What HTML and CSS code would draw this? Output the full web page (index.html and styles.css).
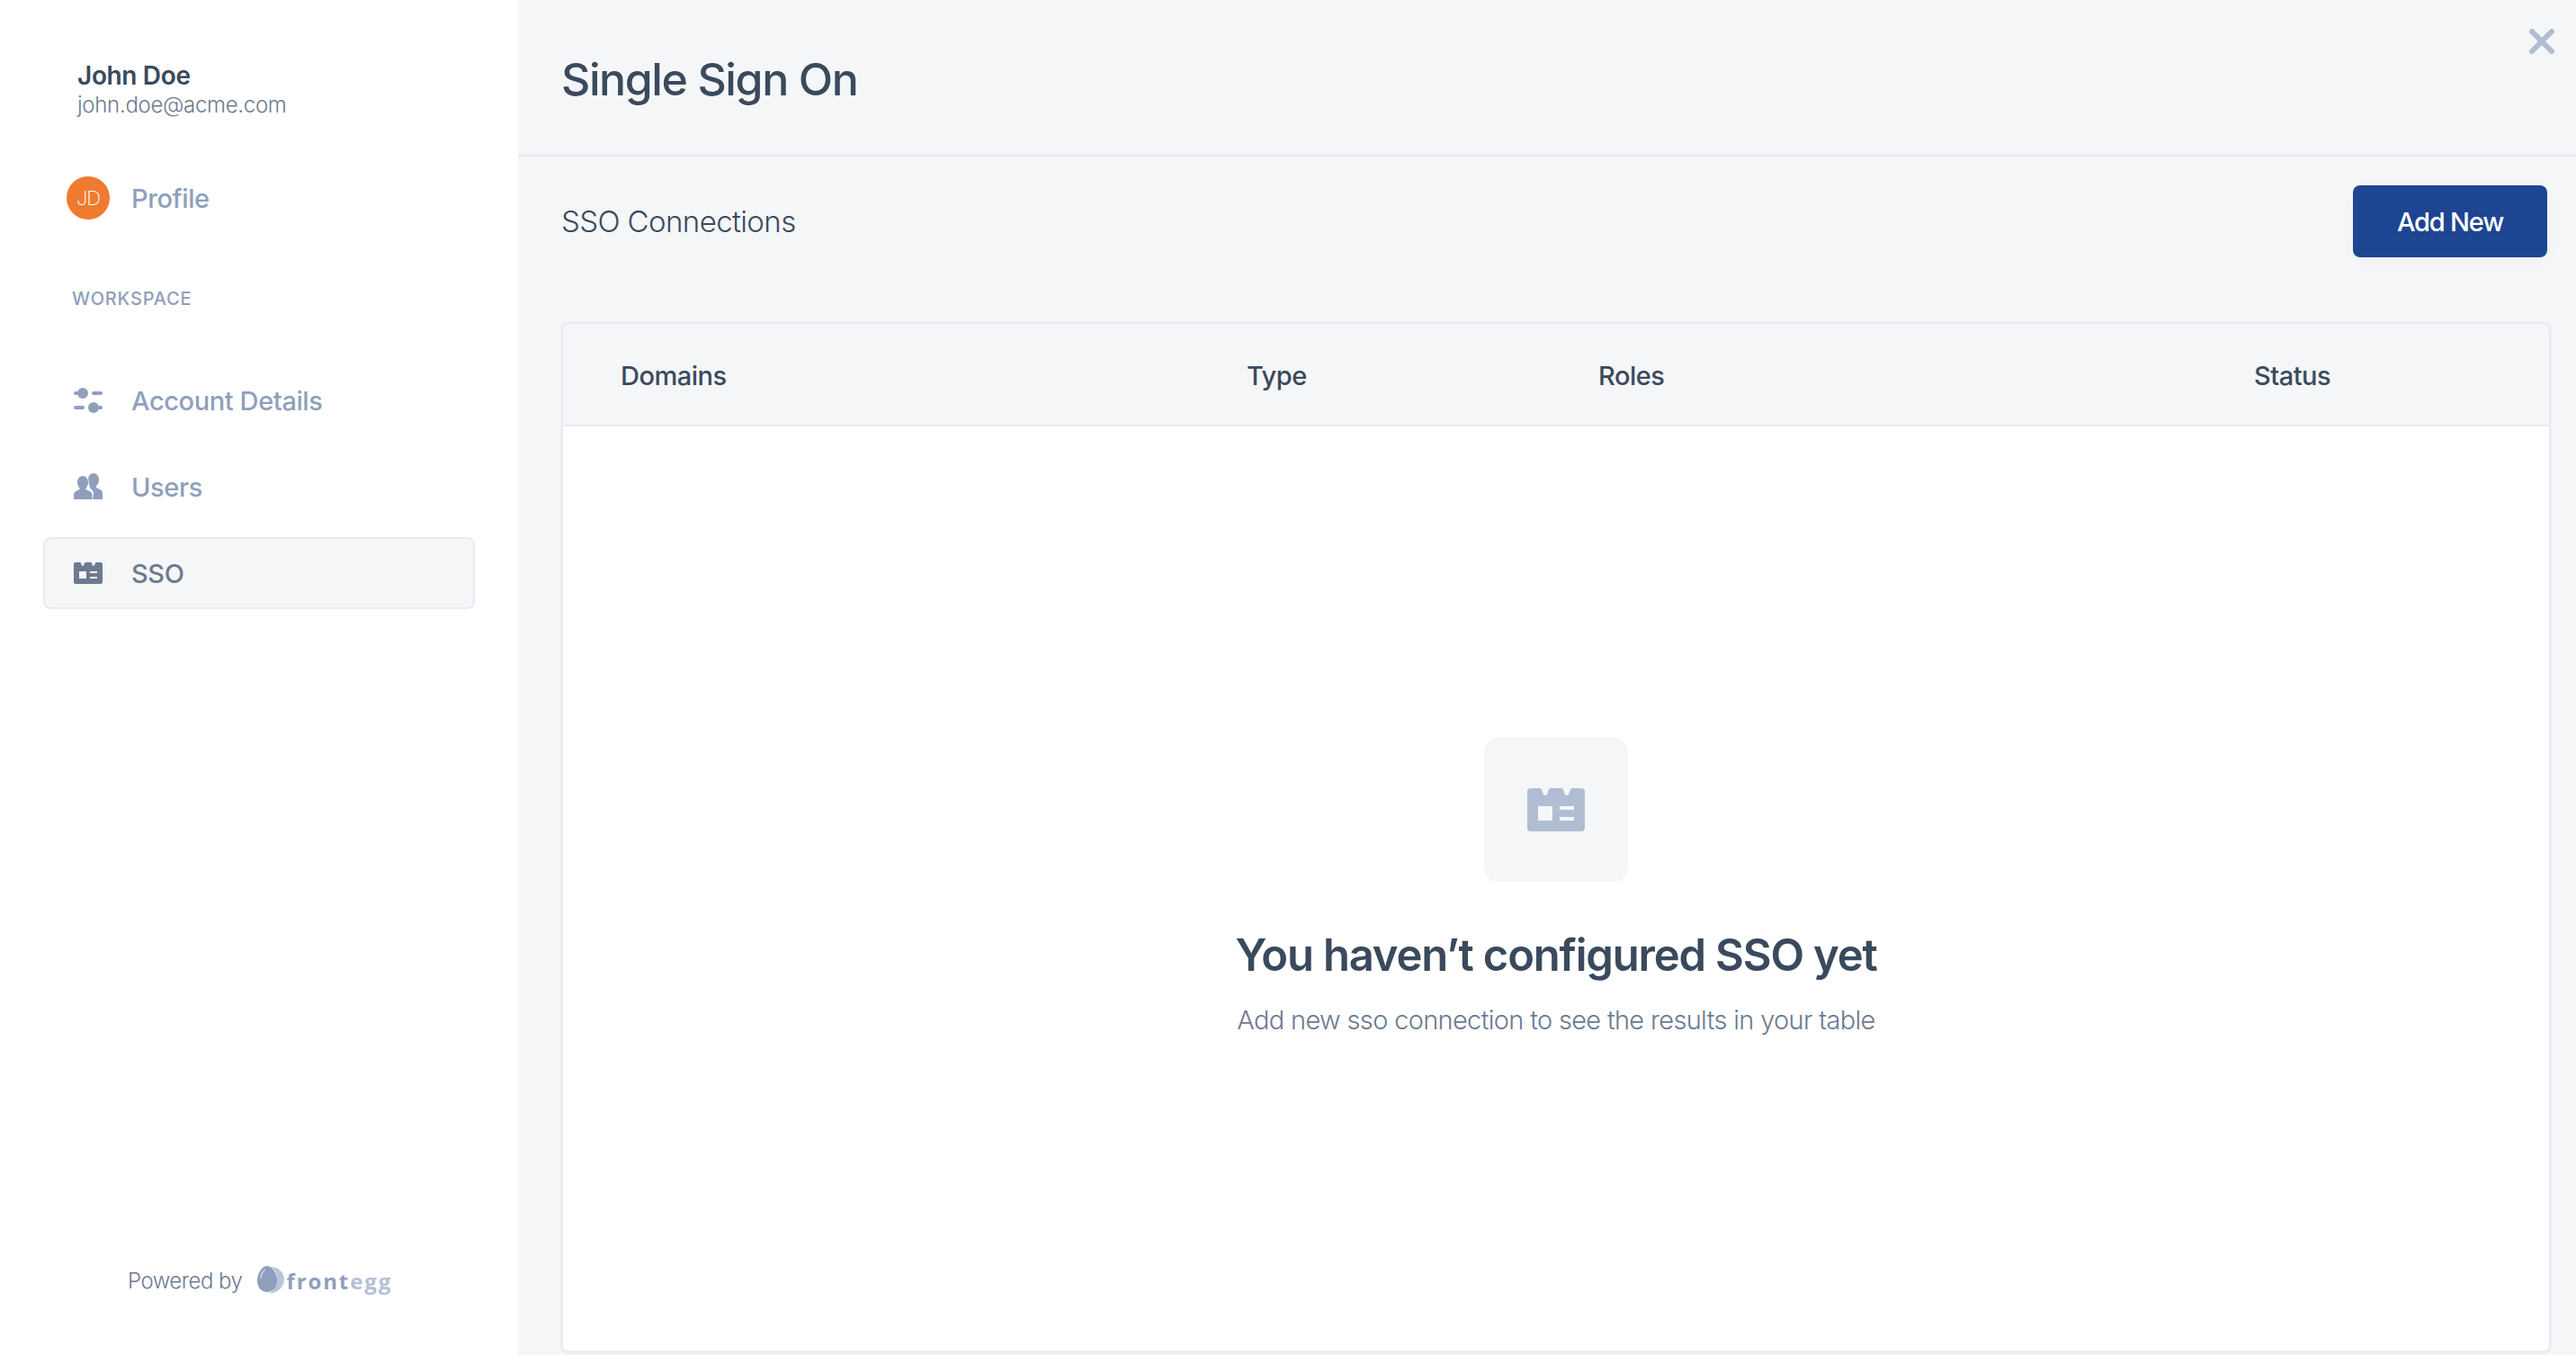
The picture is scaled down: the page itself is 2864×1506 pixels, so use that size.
FILE: index.html
```html
<!DOCTYPE html>
<html lang="en">
<head>
<meta charset="utf-8">
<title>Single Sign On</title>
<link rel="stylesheet" href="styles.css">
</head>
<body>
<svg class="defs" width="0" height="0" aria-hidden="true">
  <symbol id="badge" viewBox="0 0 64 48">
    <path fill="currentColor" fill-rule="evenodd" d="M4 0H14C17 0 16.5 8 20 8C23.5 8 23 0 26 0H38C41 0 40.5 8 44 8C47.5 8 47 0 50 0H60a4 4 0 0 1 4 4V44a4 4 0 0 1-4 4H4a4 4 0 0 1-4-4V4a4 4 0 0 1 4-4ZM12 20V36H28V20ZM36 20V24H52V20ZM36 32V36H52V32Z"/>
  </symbol>
</svg>
<div class="app">
  <aside class="sidebar">
    <div class="user">
      <div class="user-name">John Doe</div>
      <div class="user-mail">john.doe@acme.com</div>
    </div>
    <div class="nav-item nav-profile">
      <span class="avatar">JD</span>
      <span>Profile</span>
    </div>
    <div class="section-label">WORKSPACE</div>
    <nav class="nav">
      <div class="nav-item">
        <svg class="nav-icon" viewBox="0 0 32 32" fill="currentColor">
          <rect x="0" y="6" width="6" height="4" rx="2"/><circle cx="10" cy="8" r="6"/><rect x="20" y="6" width="12" height="4" rx="2"/>
          <rect x="0" y="22" width="12" height="4" rx="2"/><circle cx="22" cy="24" r="6"/><rect x="26" y="22" width="6" height="4" rx="2"/>
        </svg>
        <span>Account Details</span>
      </div>
      <div class="nav-item">
        <svg class="nav-icon" viewBox="0 0 32 32" fill="currentColor">
          <path d="M22 1c3.500 0 6 3 6 7 0 3-1 5.500-3 7v2c2 1.500 7 2 7 6v6a1 1 0 0 1-1 1H21l1-7c0-2-2-4-4-5.500v-2.500c-2-1.500-2-4-2-6.500C16 4 18.500 1 22 1z"/>
          <path stroke="#fff" stroke-width="1.500" paint-order="stroke" d="M10 4c3.500 0 6 3 6 7 0 3-1 5-2.500 6.500V19c2.500 1.500 7 2 7 6v5H1a1 1 0 0 1-1-1v-4c0-4 4-4.500 6.500-6v-1.500C5 16 4 14 4 11c0-4 2.500-7 6-7z"/>
        </svg>
        <span>Users</span>
      </div>
      <div class="nav-item nav-active">
        <svg class="nav-icon nav-icon-badge"><use href="#badge"/></svg>
        <span>SSO</span>
      </div>
    </nav>
    <div class="powered">
      <span class="powered-text">Powered by</span>
      <svg class="egg" viewBox="0 0 30 32">
        <path fill="#b9c5d9" d="M15 1c8 0 15 6 15 14s-7 15-17 16c6-4 9-10 9-16S20 4 15 1z"/>
        <path fill="#8f9fbb" d="M11 0c6 0 11 9 11 16s-4 13-11 13S0 23 0 16 5 0 11 0z"/>
        <path fill="none" stroke="#c9d3e3" stroke-width="1.500" d="M4 14c0-4 2-8 5-10"/>
      </svg>
      <span class="brand"><span class="brand-a">front</span><span class="brand-b">egg</span></span>
    </div>
  </aside>
  <main class="main">
    <header class="page-head">
      <h1 class="page-title">Single Sign On</h1>
    </header>
    <button class="close" aria-label="Close">
      <svg viewBox="0 0 28 28" width="28" height="28"><path d="M3 3L25 25M25 3L3 25" stroke="currentColor" stroke-width="6" stroke-linecap="round"/></svg>
    </button>
    <section class="content">
      <div class="toolbar">
        <h2 class="toolbar-title">SSO Connections</h2>
        <button class="btn-add">Add New</button>
      </div>
      <div class="table">
        <div class="table-head">
          <span>Domains</span>
          <span>Type</span>
          <span>Roles</span>
          <span>Status</span>
        </div>
        <div class="table-body">
          <div class="empty-tile"><svg class="empty-icon"><use href="#badge"/></svg></div>
          <h3 class="empty-title">You haven’t configured SSO yet</h3>
          <p class="empty-text">Add new sso connection to see the results in your table</p>
        </div>
      </div>
    </section>
  </main>
</div>
</body>
</html>
```
FILE: styles.css
```css
* { box-sizing: border-box; }
html, body { margin: 0; height: 100%; }
body { font-family: Inter, "Noto Sans", sans-serif; background: #f5f6f8; color: #3a4a5c; overflow: hidden; }
.defs { position: absolute; }
.app { display: flex; height: 1506px; }

.sidebar { width: 576px; flex: none; background: #fff; display: flex; flex-direction: column; padding: 0 48px; }
.user { padding: 67px 0 0 38px; }
.user-name { font-size: 28px; font-weight: 600; line-height: 34px; color: #3a4a5c; letter-spacing: -0.35px; }
.user-mail { font-size: 24px; font-weight: 300; line-height: 32px; color: #6d7a8f; letter-spacing: -0.3px; }
.nav-item { display: flex; align-items: center; gap: 32px; height: 80px; padding-left: 32px; font-size: 29px; font-weight: 500; color: #8f9fbb; letter-spacing: -0.4px; border: 2px solid transparent; border-radius: 8px; }
.nav-profile { margin-top: 63px; gap: 24px; padding-left: 26px; height: 48px; border: 0; }
.avatar { width: 48px; height: 48px; border-radius: 50%; background: #f07a30; color: #fff; font-size: 22px; font-weight: 200; display: flex; align-items: center; justify-content: center; letter-spacing: -1px; }
.section-label { margin: 76px 0 0 32px; font-size: 20px; line-height: 24px; font-weight: 500; letter-spacing: 0.8px; color: #8f9fbb; }
.nav { margin-top: 61px; display: flex; flex-direction: column; gap: 16px; }
.nav-icon { width: 32px; height: 32px; flex: none; }
.nav-icon-badge { height: 24px; }
.nav-active { background: #f5f6f8; border-color: #e8ebf3; color: #6d7a8f; }
.powered { margin-top: auto; margin-bottom: 68px; display: flex; align-items: center; padding-left: 94px; height: 30px; }
.powered-text { font-size: 24px; font-weight: 300; color: #6d7a8f; letter-spacing: -0.5px; }
.egg { width: 30px; height: 32px; margin-left: 17px; }
.brand { font-family: "Open Sans", sans-serif; font-size: 24px; font-weight: 700; letter-spacing: 1.9px; margin-left: 2px; }
.brand-a { color: #8f9fbb; }
.brand-b { color: #b4c0d5; }

.main { flex: 1; min-width: 0; display: flex; flex-direction: column; position: relative; }
.page-head { height: 174px; flex: none; border-bottom: 2px solid #e8ebf3; display: flex; align-items: center; padding: 0 48px; }
.page-title { margin: 0; font-size: 50px; font-weight: 500; letter-spacing: -1.4px; color: #3a4a5c; transform: translateY(2px); }
.close { position: absolute; top: 32px; right: 24px; width: 28px; height: 28px; padding: 0; background: none; border: 0; color: #b0bdd3; }
.content { flex: 1; min-height: 0; display: flex; flex-direction: column; padding: 32px 28px 0 48px; }
.toolbar { display: flex; justify-content: space-between; align-items: center; height: 80px; padding-right: 4px; flex: none; }
.toolbar-title { margin: 0; font-size: 33px; font-weight: 300; color: #3a4a5c; letter-spacing: -0.6px; }
.btn-add { width: 216px; height: 80px; background: #1e4591; color: #fff; border: 0; border-radius: 8px; font: 500 29px Inter, sans-serif; letter-spacing: -1.200px; box-shadow: 0 4px 24px rgba(0,0,0,.02); }
.table { margin-top: 72px; flex: 1; min-height: 0; margin-bottom: 3px; border: 2px solid #e8ebf3; border-radius: 8px; display: flex; flex-direction: column; overflow: hidden; box-shadow: 0 1px 3px rgba(143,159,187,.18); }
.table-head { height: 114px; flex: none; border-bottom: 2px solid #e8ebf3; display: grid; grid-template-columns: 696px 391px 729px 1fr; align-items: center; padding: 2px 0 0 64px; font-size: 29px; font-weight: 500; color: #3a4a5c; letter-spacing: -0.5px; }
.table-body { flex: 1; background: #fff; display: flex; flex-direction: column; align-items: center; padding-top: 346px; }
.empty-tile { width: 160px; height: 160px; border-radius: 16px; background: #f5f6f8; display: flex; align-items: center; justify-content: center; }
.empty-icon { width: 64px; height: 48px; color: #b0bdd3; }
.empty-title { margin: 50px 0 0; font-size: 49px; line-height: 64px; font-weight: 600; letter-spacing: -1.2px; color: #3a4a5c; }
.empty-text { margin: 20px 0 0; font-size: 29px; line-height: 40px; font-weight: 300; letter-spacing: -0.67px; color: #6d7a8f; }
```
